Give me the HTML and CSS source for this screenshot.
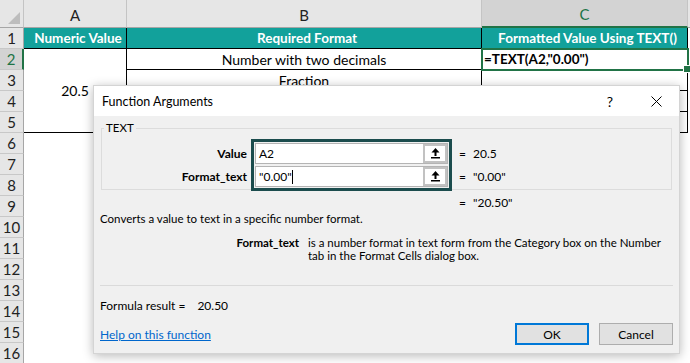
FILE: index.html
```html
<!DOCTYPE html>
<html lang="en">
<head>
  <meta charset="UTF-8" />
  <title>TEXT function - Function Arguments</title>
  <link rel="stylesheet" href="styles.css">
</head>
<body>

  <!-- Worksheet -->
  <div class="sheet">
    <div class="corner"></div>
    <div class="col-head">A</div>
    <div class="col-head">B</div>
    <div class="col-head selected">C</div>
    <div class="col-head last"></div>

    <div class="row-head">1</div>
    <div class="cell title b-right b-bottom">Numeric Value</div>
    <div class="cell title b-right b-bottom">Required Format</div>
    <div class="cell title b-right b-bottom">Formatted Value Using TEXT()</div>

    <div class="row-head selected">2</div>
    <div class="cell merged b-right b-bottom">20.5</div>
    <div class="cell center b-right b-bottom">Number with two decimals</div>
    <div class="cell formula active b-right b-bottom">=TEXT(A2,"0.00")</div>

    <div class="row-head">3</div>
    <div class="cell center b-right b-bottom">Fraction</div>
    <div class="cell b-right b-bottom"></div>

    <div class="row-head">4</div>
    <div class="cell b-right b-bottom"></div>
    <div class="cell b-right b-bottom"></div>

    <div class="row-head">5</div>
    <div class="cell b-right b-bottom"></div>
    <div class="cell b-right b-bottom"></div>

    <div class="row-head">6</div>
    <div class="row-head">7</div>
    <div class="row-head">8</div>
    <div class="row-head">9</div>
    <div class="row-head">10</div>
    <div class="row-head">11</div>
    <div class="row-head">12</div>
    <div class="row-head">13</div>
    <div class="row-head">14</div>
    <div class="row-head">15</div>
    <div class="row-head">16</div>
  </div>

  <!-- Function Arguments dialog -->
  <div class="dialog">
    <div class="titlebar">
      <span class="title">Function Arguments</span>
      <span class="tb-btn help">?</span>
      <span class="tb-btn">
        <svg width="11" height="11" viewBox="0 0 11 11">
          <path d="M0.5 0.5 L10.5 10.5 M10.5 0.5 L0.5 10.5" stroke="#000" stroke-width="1" fill="none"/>
        </svg>
      </span>
    </div>

    <div class="dialog-body">
      <fieldset class="args">
        <legend>TEXT</legend>
        <div class="args-row">
          <div class="arg-labels">
            <div>Value</div>
            <div>Format_text</div>
          </div>
          <div class="arg-inputs">
            <div class="field">
              <span class="field-text">A2</span>
              <span class="collapse">
                <svg width="9" height="11" viewBox="0 0 9 11">
                  <path d="M4.5 0 L8.5 4.5 L0.5 4.5 Z" fill="#000"/>
                  <rect x="3.5" y="4" width="2" height="4" fill="#000"/>
                  <rect x="0" y="9" width="9" height="1.5" fill="#000"/>
                </svg>
              </span>
            </div>
            <div class="field">
              <span class="field-text">"0.00"<i class="caret"></i></span>
              <span class="collapse">
                <svg width="9" height="11" viewBox="0 0 9 11">
                  <path d="M4.5 0 L8.5 4.5 L0.5 4.5 Z" fill="#000"/>
                  <rect x="3.5" y="4" width="2" height="4" fill="#000"/>
                  <rect x="0" y="9" width="9" height="1.5" fill="#000"/>
                </svg>
              </span>
            </div>
          </div>
          <div class="arg-values">
            <div><span class="eq">=</span>20.5</div>
            <div><span class="eq">=</span>"0.00"</div>
          </div>
        </div>
      </fieldset>

      <div class="result-line"><span class="eq">=</span>"20.50"</div>

      <p class="summary">Converts a value to text in a specific number format.</p>

      <div class="arg-help">
        <b>Format_text</b>
        <span>is a number format in text form from the Category box on the Number<br>tab in the Format Cells dialog box.</span>
      </div>

      <hr class="sep">

      <div class="formula-result">Formula result =<span class="res">20.50</span></div>

      <div class="footer">
        <a href="#" class="help-link">Help on this function</a>
        <button class="btn ok">OK</button>
        <button class="btn">Cancel</button>
      </div>
    </div>
  </div>

</body>
</html>
```

FILE: styles.css
```css
* {
  margin: 0;
  padding: 0;
  box-sizing: border-box;
}

body {
  width: 690px;
  height: 363px;
  overflow: hidden;
  position: relative;
  background: #fff;
  font-family: Lato, "Liberation Sans", sans-serif;
  color: #000;
}

/* Worksheet grid */
.sheet {
  display: grid;
  grid-template-columns: 24px 103px 355px 206px 1fr;
  grid-template-rows: 28px repeat(16, 21px);
  font-size: 14px;
}

.corner {
  background: #e6e6e6;
  border-right: 1px solid #c4c4c4;
  border-bottom: 1px solid #a6a6a6;
  position: relative;
}

.corner::after {
  content: "";
  position: absolute;
  right: 3px;
  bottom: 3px;
  width: 12px;
  height: 12px;
  background: #bdbdbd;
  clip-path: polygon(100% 0, 100% 100%, 0 100%);
}

.col-head {
  background: #e6e6e6;
  border-right: 1px solid #c4c4c4;
  border-bottom: 1px solid #a6a6a6;
  display: flex;
  align-items: center;
  justify-content: center;
  font-size: 15px;
  color: #222;
  padding-top: 2px;
}

.col-head.selected {
  background: #d3d3d3;
  color: #217346;
  border-bottom: 2px solid #217346;
}

.col-head.last {
  border-right: none;
}

.row-head {
  grid-column: 1;
  background: #e6e6e6;
  border-right: 1px solid #a6a6a6;
  border-bottom: 1px solid #c8c8c8;
  text-align: center;
  font-size: 15px;
  line-height: 20px;
  color: #222;
}

.row-head.selected {
  background: #d3d3d3;
  color: #217346;
  border-right: 2px solid #217346;
}

.cell {
  display: flex;
  align-items: center;
  white-space: nowrap;
  overflow: hidden;
  padding: 0 2px;
}

.cell.title {
  background: #12a19b;
  color: #fff;
  font-weight: 700;
  font-size: 13.5px;
  justify-content: center;
}

.cell.center {
  justify-content: center;
}

.cell.merged {
  grid-row: span 4;
  justify-content: center;
}

.cell.formula {
  font-weight: 700;
  font-size: 13.5px;
}

.cell.active {
  overflow: visible;
  position: relative;
  outline: 2px solid #217346;
  outline-offset: -1px;
}

.cell.active::after {
  content: "";
  position: absolute;
  right: -4px;
  bottom: -4px;
  width: 6px;
  height: 6px;
  background: #217346;
  border: 1px solid #fff;
}

.b-right {
  border-right: 1px solid #000;
}

.b-bottom {
  border-bottom: 1px solid #000;
}

/* Dialog */
.dialog {
  position: absolute;
  left: 93px;
  top: 85px;
  width: 587px;
  height: 269px;
  background: #f0f0f0;
  border: 1px solid #d4d4d4;
  box-shadow: 0 2px 10px rgba(0, 0, 0, 0.28);
  font-size: 11.5px;
  color: #000;
}

.titlebar {
  height: 30px;
  background: #fff;
  display: flex;
  align-items: center;
}

.title {
  flex: 1;
  padding-left: 8px;
  font-size: 12.5px;
}

.tb-btn {
  width: 46px;
  height: 30px;
  display: flex;
  align-items: center;
  justify-content: center;
  font-size: 14px;
}

.dialog-body {
  padding: 4px 0 0;
}

.args {
  margin: 0 7px;
  border: 1px solid #dcdcdc;
  padding: 3px 0 0;
}

.args legend {
  margin-left: 2px;
  padding: 0 2px;
  line-height: 16px;
}

.args-row {
  display: flex;
  margin-bottom: -2px;
}

.arg-labels {
  width: 145px;
  text-align: right;
  font-weight: 700;
  font-size: 12px;
  padding-top: 4px;
}

.arg-labels div {
  height: 23px;
  line-height: 21px;
}

.arg-inputs {
  margin-left: 4px;
  width: 201px;
  border: 3px solid #1b4c4d;
  padding: 1px;
  display: flex;
  flex-direction: column;
  gap: 2px;
}

.field {
  height: 21px;
  display: flex;
  background: #fff;
  border: 1px solid #b4b4b4;
}

.field-text {
  flex: 1;
  padding-left: 3px;
  line-height: 19px;
  font-size: 12px;
  color: #000;
}

.caret {
  display: inline-block;
  width: 1px;
  height: 14px;
  background: #000;
  vertical-align: -3px;
}

.collapse {
  width: 24px;
  border: 2px solid #c2c2c2;
  background: #fff;
  display: flex;
  align-items: center;
  justify-content: center;
}

.arg-values {
  margin-left: 7px;
  padding-top: 4px;
  font-size: 12px;
}

.arg-values div {
  height: 23px;
  line-height: 21px;
}

.eq {
  display: inline-block;
  width: 14px;
}

.result-line {
  margin: 5px 0 0 365px;
  line-height: 16px;
  font-size: 12px;
}

.summary {
  padding-left: 6px;
  line-height: 16px;
}

.arg-help {
  margin-top: 9px;
  display: flex;
  gap: 9px;
  line-height: 13px;
}

.arg-help b {
  width: 205px;
  text-align: right;
}

.sep {
  margin: 23px 6px 0;
  border: none;
  border-top: 1px solid #dadada;
}

.formula-result {
  margin-top: 12px;
  padding-left: 6px;
  line-height: 16px;
  font-size: 12px;
}

.formula-result .res {
  margin-left: 12px;
}

.footer {
  margin-top: 9px;
  padding: 0 6px;
  display: flex;
  align-items: center;
  gap: 10px;
}

.help-link {
  flex: 1;
  color: #0066cc;
  text-decoration: underline;
  font-size: 12px;
}

.btn {
  width: 74px;
  height: 22px;
  background: #e1e1e1;
  border: 1px solid #adadad;
  font-family: inherit;
  font-size: 12px;
  color: #000;
}

.btn.ok {
  border: 2px solid #0078d7;
}
```
